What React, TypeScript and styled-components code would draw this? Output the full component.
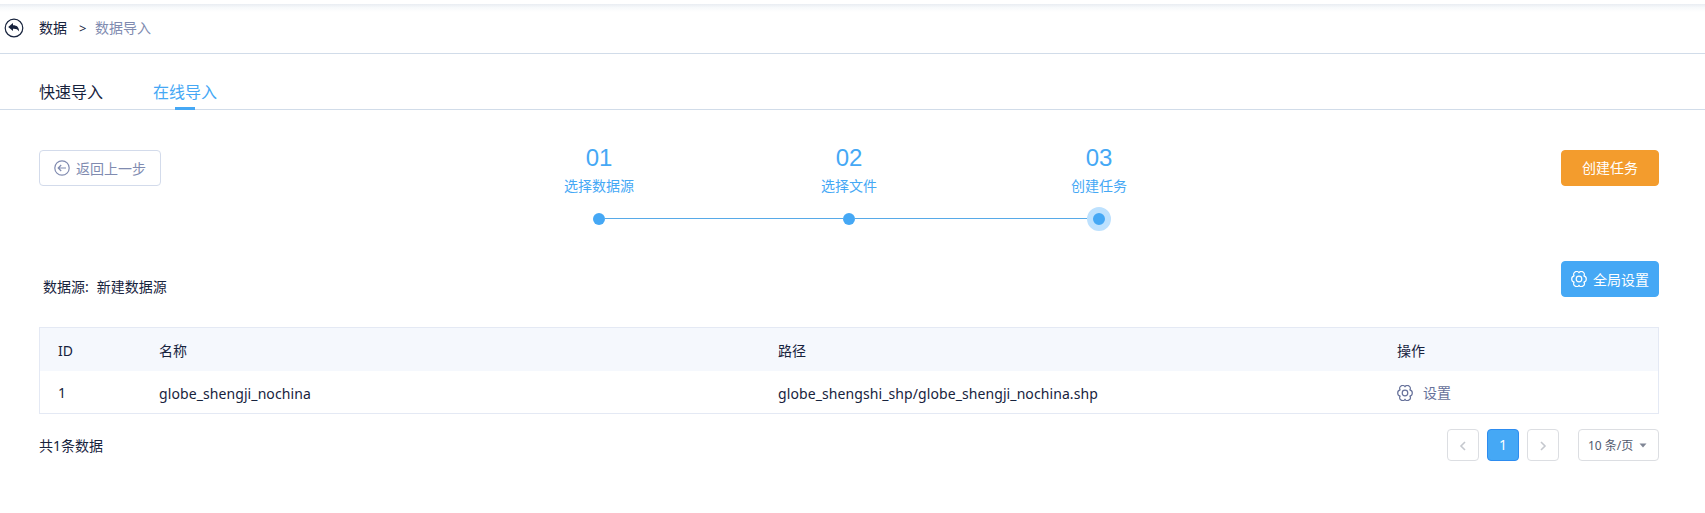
import React from "react";
import styled, { createGlobalStyle } from "styled-components";

const blue = "#45a8f5";
const ink = "#17233d";
const muted = "#808bb0";

const GlobalStyle = createGlobalStyle`
  *, *::before, *::after { box-sizing: border-box; }
  body {
    margin: 0;
    background: #fff;
    color: ${ink};
    font: 14px/20px "Noto Sans", "Noto Sans CJK SC", sans-serif;
  }
`;

const Page = styled.div`
  display: flex;
  flex-direction: column;
  height: 513px;
  overflow: hidden;
`;

const TopShade = styled.div`
  height: 8px;
  margin-top: 4px;
  background: linear-gradient(#e9edf2, #f7f9fb 45%, #fff);
`;

const Breadcrumb = styled.nav`
  display: flex;
  align-items: center;
  height: 42px;
  padding: 0 0 10px 4px;
  border-bottom: 1px solid #d1dce9;
  white-space: nowrap;
`;

const Crumb = styled.span<{ $current?: boolean }>`
  color: ${(p) => (p.$current ? muted : ink)};
`;

const CrumbArrow = styled.span`
  width: 10px;
  margin: 1px 6px 0 12px;
  font-size: 13px;
`;

const BackIcon = styled.svg`
  margin-right: 15px;
`;

const Tabs = styled.div`
  display: flex;
  gap: 50px;
  height: 56px;
  padding-left: 39px;
  border-bottom: 1px solid #d1dce9;
`;

const Tab = styled.div<{ $active?: boolean }>`
  display: flex;
  flex-direction: column;
  align-items: center;
  justify-content: space-between;
  height: 56px;
  padding-top: 28px;
  font-size: 16px;
  color: ${(p) => (p.$active ? blue : ink)};
  &::after {
    content: "";
    width: 20px;
    height: 3px;
    background: ${(p) => (p.$active ? blue : "transparent")};
  }
`;

const Content = styled.main`
  padding: 40px 46px 0 39px;
`;

const ActionBar = styled.div`
  display: flex;
  justify-content: space-between;
  align-items: flex-start;
  height: 111px;
`;

const Button = styled.button<{ $kind: "plain" | "orange" | "blue" }>`
  display: flex;
  align-items: center;
  justify-content: center;
  gap: 6px;
  width: ${(p) => (p.$kind === "plain" ? 122 : 98)}px;
  height: 36px;
  padding: 0;
  border: 1px solid ${(p) => ({ plain: "#d3dbeb", orange: "#f39c2d", blue })[p.$kind]};
  border-radius: 4px;
  background: ${(p) => ({ plain: "#fff", orange: "#f39c2d", blue })[p.$kind]};
  color: ${(p) => (p.$kind === "plain" ? muted : "#fff")};
  font: inherit;
  white-space: nowrap;
`;

const ButtonText = styled.span`
  padding-top: 2px;
`;

const Steps = styled.ol`
  display: flex;
  margin: -7px 36px 0 0;
  padding: 0 0 0 12px;
  list-style: none;
`;

const Step = styled.li`
  display: flex;
  flex-direction: column;
  align-items: center;
  width: 250px;
  color: ${blue};
`;

const StepNumber = styled.span`
  font: 24px/30px "Liberation Sans", Arial, sans-serif;
`;

const StepLabel = styled.span`
  margin-top: 3px;
`;

const Track = styled.div<{ $first?: boolean; $last?: boolean }>`
  display: flex;
  align-items: center;
  width: 100%;
  height: 24px;
  margin-top: 11px;
  &::before,
  &::after {
    content: "";
    flex: 1;
    height: 1px;
    margin-top: -1px;
    background: #57aae8;
  }
  &::before { visibility: ${(p) => (p.$first ? "hidden" : "visible")}; }
  &::after { visibility: ${(p) => (p.$last ? "hidden" : "visible")}; }
`;

const Dot = styled.i<{ $halo?: boolean }>`
  width: ${(p) => (p.$halo ? 24 : 12)}px;
  height: ${(p) => (p.$halo ? 24 : 12)}px;
  border: ${(p) => (p.$halo ? 6 : 0)}px solid #bde1fe;
  border-radius: 50%;
  background: ${blue};
`;

const SourceRow = styled.div`
  display: flex;
  justify-content: space-between;
  height: 66px;
`;

const Source = styled.div`
  display: flex;
  gap: 8px;
  padding: 16px 0 0 4px;
`;

const Table = styled.div`
  border: 1px solid #e4e9f4;
`;

const Row = styled.div<{ $head?: boolean }>`
  display: grid;
  grid-template-columns: 101px 619px 619px 1fr;
  align-items: center;
  height: ${(p) => (p.$head ? 43 : 42)}px;
  padding: 2px 0 0 18px;
  background: ${(p) => (p.$head ? "#f5f8fd" : "#fff")};
`;

const Value = styled.span`
  padding-top: 2px;
  letter-spacing: 0.09px;
`;

const Setting = styled.span`
  display: flex;
  align-items: center;
  gap: 10px;
  color: #66719a;
`;

const Footer = styled.footer`
  display: flex;
  align-items: center;
  height: 32px;
  margin-top: 15px;
`;

const Total = styled.span`
  margin-right: auto;
  padding-top: 2px;
`;

const PageButton = styled.button<{ $active?: boolean }>`
  display: flex;
  align-items: center;
  justify-content: center;
  width: 32px;
  height: 32px;
  margin-left: 8px;
  padding: ${(p) => (p.$active ? "0" : "1px 0 0")};
  border: 1px solid ${(p) => (p.$active ? "#2d8cf0" : "#dcdee2")};
  border-radius: 4px;
  background: ${(p) => (p.$active ? blue : "#fff")};
  color: ${(p) => (p.$active ? "#fff" : "#c5c8ce")};
  font: inherit;
`;

const PageSize = styled.div`
  display: flex;
  align-items: center;
  justify-content: space-between;
  width: 81px;
  height: 32px;
  margin-left: 19px;
  padding: 1px 11px 0 9px;
  border: 1px solid #dcdee2;
  border-radius: 4px;
  color: #515a6e;
  font-size: 12px;
  white-space: nowrap;
`;

const Gear = () => (
  <svg width="16" height="16" viewBox="0 0 16 16" fill="none" stroke="currentColor" strokeWidth="1.2" strokeLinejoin="round">
    <path d="M8 1.8A2.7 2.7 0 0 1 12.9 4.9A3.2 3.2 0 0 1 12.9 11.1A2.7 2.7 0 0 1 8 14.2A2.7 2.7 0 0 1 3.1 11.1A3.2 3.2 0 0 1 3.1 4.9A2.7 2.7 0 0 1 8 1.8Z" />
    <circle cx="8" cy="8" r="2.8" />
  </svg>
);

const Chevron = ({ right }: { right?: boolean }) => (
  <svg width="8" height="10" viewBox="0 0 8 10" fill="none" stroke="currentColor" strokeWidth="1.6">
    <path d={right ? "M2 1L6 5L2 9" : "M6 1L2 5L6 9"} />
  </svg>
);

const steps = ["选择数据源", "选择文件", "创建任务"];

export default function App() {
  return (
    <Page>
      <GlobalStyle />
      <TopShade />
      <Breadcrumb>
        <BackIcon width="20" height="20" viewBox="0 0 20 20">
          <circle cx="10" cy="10" r="8.8" fill="none" stroke={ink} strokeWidth="1.2" />
          <path d="M4.2 9L9 5V7.3C13 7.3 15 9.3 15.1 13.5C13.8 11.3 12 10.7 9 10.8V13Z" fill={ink} />
        </BackIcon>
        <Crumb>数据</Crumb>
        <CrumbArrow>&gt;</CrumbArrow>
        <Crumb $current>数据导入</Crumb>
      </Breadcrumb>
      <Tabs>
        <Tab>快速导入</Tab>
        <Tab $active>在线导入</Tab>
      </Tabs>
      <Content>
        <ActionBar>
          <Button $kind="plain">
            <svg width="16" height="16" viewBox="0 0 16 16" fill="none" stroke="currentColor" strokeWidth="1.2">
              <circle cx="8" cy="8" r="7.2" />
              <path d="M12 8H4.5M7.2 5L4.2 8L7.2 11" />
            </svg>
            <ButtonText>返回上一步</ButtonText>
          </Button>
          <Steps>
            {steps.map((label, i) => (
              <Step key={label}>
                <StepNumber>0{i + 1}</StepNumber>
                <StepLabel>{label}</StepLabel>
                <Track $first={i === 0} $last={i === 2}>
                  <Dot $halo={i === 2} />
                </Track>
              </Step>
            ))}
          </Steps>
          <Button $kind="orange">创建任务</Button>
        </ActionBar>
        <SourceRow>
          <Source>
            <span>数据源:</span>
            <span>新建数据源</span>
          </Source>
          <Button $kind="blue">
            <Gear />
            <ButtonText>全局设置</ButtonText>
          </Button>
        </SourceRow>
        <Table>
          <Row $head>
            <span>ID</span>
            <span>名称</span>
            <span>路径</span>
            <span>操作</span>
          </Row>
          <Row>
            <span>1</span>
            <Value>globe_shengji_nochina</Value>
            <Value>globe_shengshi_shp/globe_shengji_nochina.shp</Value>
            <Setting>
              <Gear />
              设置
            </Setting>
          </Row>
        </Table>
        <Footer>
          <Total>共1条数据</Total>
          <PageButton>
            <Chevron />
          </PageButton>
          <PageButton $active>1</PageButton>
          <PageButton>
            <Chevron right />
          </PageButton>
          <PageSize>
            10 条/页
            <svg width="8" height="5" viewBox="0 0 8 5" fill="#808695">
              <path d="M0.5 0.5H7.5L4 4.5Z" />
            </svg>
          </PageSize>
        </Footer>
      </Content>
    </Page>
  );
}
